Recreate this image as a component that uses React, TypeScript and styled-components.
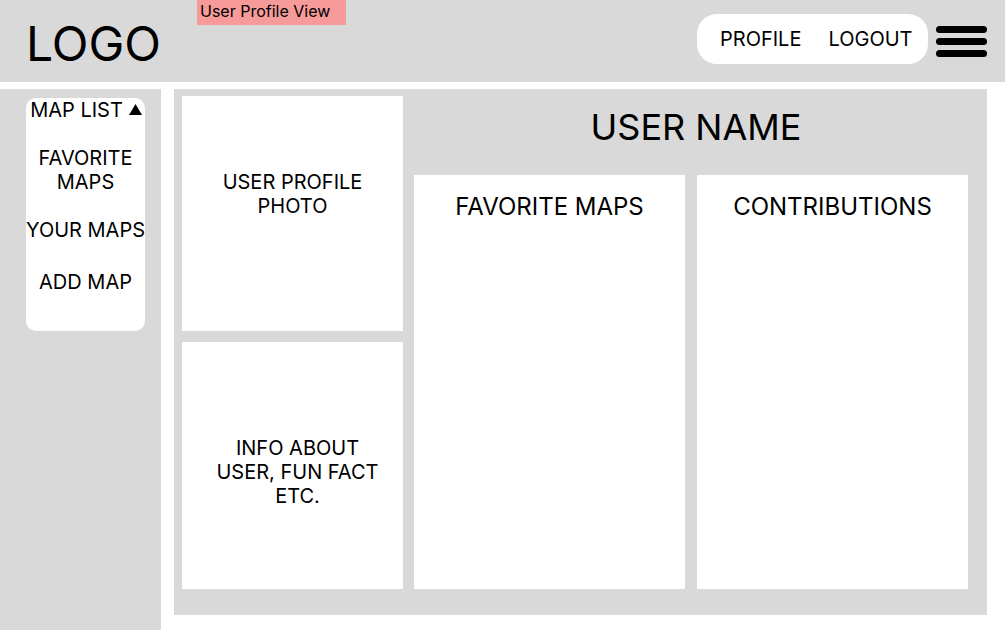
import React from "react";
import styled, { createGlobalStyle } from "styled-components";

const Global = createGlobalStyle`
  html, body { margin: 0; padding: 0; background: #ffffff; }
  body { font-family: Inter, "Noto Sans", "Liberation Sans", sans-serif; color: #000; }
  * { box-sizing: border-box; }
`;

const Page = styled.div`
  position: relative;
  width: 1005px;
  height: 630px;
  overflow: hidden;
  background: #fff;
`;

const Header = styled.header`
  height: 82px;
  background: #d9d9d9;
  display: flex;
  align-items: flex-start;
  padding: 0 18px 0 26px;
`;

const Logo = styled.div`
  font-size: 48px;
  line-height: 58px;
  margin-top: 15px;
  font-weight: 400;
`;

const Spacer = styled.div`
  flex: 1;
`;

const NavPill = styled.nav`
  margin-top: 14px;
  height: 50px;
  width: 231px;
  background: #fff;
  border-radius: 20px;
  display: flex;
  align-items: center;
  gap: 27px;
  padding: 0 0 0 23px;
`;

const NavLink = styled.span`
  font-size: 20px;
  line-height: 24px;
  white-space: nowrap;
`;

const Burger = styled.div`
  margin-top: 26px;
  margin-left: 8px;
  width: 51px;
  display: flex;
  flex-direction: column;
  gap: 5px;
`;

const BurgerBar = styled.span`
  display: block;
  height: 7px;
  border-radius: 4px;
  background: #000;
`;

const Tag = styled.div`
  position: absolute;
  left: 197px;
  top: 0;
  width: 149px;
  height: 25px;
  background: #f69a9a;
  font-size: 16px;
  line-height: 22px;
  padding: 0 3px;
`;

const Body = styled.div`
  display: flex;
  margin-top: 7px;
  height: 541px;
`;

const Sidebar = styled.aside`
  width: 161px;
  background: #d9d9d9;
  padding: 9px 16px 0 26px;
`;

const SideCard = styled.div`
  width: 119px;
  height: 233px;
  background: #fff;
  border-radius: 10px;
  display: flex;
  flex-direction: column;
  align-items: center;
  gap: 24px;
`;

const SideItem = styled.div<{ $extra?: number }>`
  font-size: 20px;
  line-height: 24px;
  text-align: center;
  white-space: nowrap;
  margin-top: ${(p) => p.$extra ?? 0}px;
`;

const TitleRow = styled.div`
  display: flex;
  align-items: center;
  gap: 6px;
  padding-left: 1px;
`;

const MainPanel = styled.main`
  margin-left: 13px;
  width: 813px;
  height: 526px;
  background: #d9d9d9;
  padding: 7px 19px 26px 8px;
  display: flex;
  gap: 11px;
`;

const LeftCol = styled.div`
  width: 221px;
  display: flex;
  flex-direction: column;
  gap: 11px;
`;

const Card = styled.div<{ $h?: number; $pt: number; $pl?: number }>`
  background: #fff;
  ${(p) => (p.$h ? `height: ${p.$h}px;` : "flex: 1;")}
  padding-top: ${(p) => p.$pt}px;
  padding-left: ${(p) => p.$pl ?? 0}px;
  text-align: center;
  font-size: 20px;
  line-height: 24px;
`;

const RightCol = styled.div`
  flex: 1;
  display: flex;
  flex-direction: column;
`;

const UserName = styled.h1`
  margin: 0;
  height: 79px;
  padding: 9px 0 0 10px;
  font-size: 36px;
  line-height: 44px;
  font-weight: 400;
  text-align: center;
`;

const CardsRow = styled.div`
  flex: 1;
  display: flex;
  gap: 12px;
`;

const ListCard = styled.section`
  flex: 1;
  background: #fff;
  padding-top: 17px;
  text-align: center;
`;

const ListTitle = styled.h2`
  margin: 0;
  font-size: 24px;
  line-height: 29px;
  font-weight: 400;
`;

const Triangle = () => (
  <svg width="13" height="12" viewBox="0 0 13 12" aria-hidden="true">
    <polygon points="6.5,0 13,11 0,11" fill="#000" />
  </svg>
);

export default function App() {
  return (
    <Page>
      <Global />
      <Header>
        <Logo>LOGO</Logo>
        <Spacer />
        <NavPill>
          <NavLink>PROFILE</NavLink>
          <NavLink>LOGOUT</NavLink>
        </NavPill>
        <Burger>
          <BurgerBar />
          <BurgerBar />
          <BurgerBar />
        </Burger>
      </Header>
      <Tag>User Profile View</Tag>
      <Body>
        <Sidebar>
          <SideCard>
            <SideItem>
              <TitleRow>
                MAP LIST <Triangle />
              </TitleRow>
            </SideItem>
            <SideItem>
              FAVORITE
              <br />
              MAPS
            </SideItem>
            <SideItem>YOUR MAPS</SideItem>
            <SideItem $extra={4}>ADD MAP</SideItem>
          </SideCard>
        </Sidebar>
        <MainPanel>
          <LeftCol>
            <Card $h={235} $pt={74}>
              USER PROFILE
              <br />
              PHOTO
            </Card>
            <Card $pt={94} $pl={10}>
              INFO ABOUT
              <br />
              USER, FUN FACT
              <br />
              ETC.
            </Card>
          </LeftCol>
          <RightCol>
            <UserName>USER NAME</UserName>
            <CardsRow>
              <ListCard>
                <ListTitle>FAVORITE MAPS</ListTitle>
              </ListCard>
              <ListCard>
                <ListTitle>CONTRIBUTIONS</ListTitle>
              </ListCard>
            </CardsRow>
          </RightCol>
        </MainPanel>
      </Body>
    </Page>
  );
}
